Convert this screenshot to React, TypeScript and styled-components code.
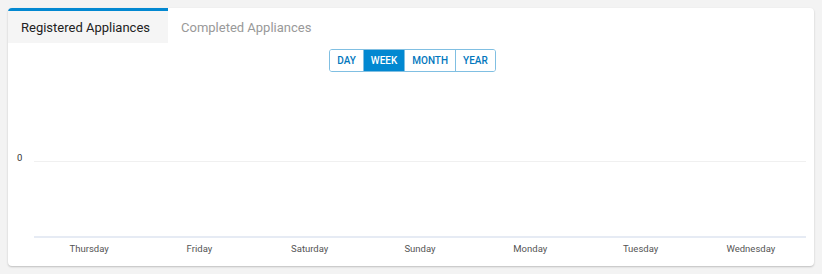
import styled, { createGlobalStyle } from "styled-components";
import { useState } from "react";

const GlobalStyle = createGlobalStyle`
  body {
    margin: 0;
    padding: 8px;
    background: #f3f3f3;
    font-family: Roboto, "Liberation Sans", sans-serif;
  }
`;

const days = ["Thursday", "Friday", "Saturday", "Sunday", "Monday", "Tuesday", "Wednesday"];
const ranges = ["DAY", "WEEK", "MONTH", "YEAR"];

export default function App() {
  const [tab, setTab] = useState(0);
  const [range, setRange] = useState("WEEK");

  return (
    <>
      <GlobalStyle />
      <Card>
        <TabBar>
          <Tab $active={tab === 0} onClick={() => setTab(0)}>
            Registered Appliances
          </Tab>
          <Tab $active={tab === 1} onClick={() => setTab(1)}>
            Completed Appliances
          </Tab>
        </TabBar>
        <Toolbar>
          <ButtonGroup>
            {ranges.map((r) => (
              <RangeButton key={r} $active={r === range} onClick={() => setRange(r)}>
                {r}
              </RangeButton>
            ))}
          </ButtonGroup>
        </Toolbar>
        <Chart />
      </Card>
    </>
  );
}

const Chart = () => {
  const left = 26;
  const right = 798;
  const step = (right - left) / days.length;
  return (
    <ChartSvg width={806} height={194} viewBox="0 0 806 194">
      <text x={9} y={89} className="ylabel">
        0
      </text>
      <line x1={left} x2={right} y1={89.5} y2={89.5} stroke="#f0f0f0" />
      <line x1={left} x2={right} y1={165} y2={165} stroke="#e6ebf4" strokeWidth={2} />
      {days.map((d, i) => (
        <text key={d} x={left + step * i + step / 2} y={180} className="xlabel" textAnchor="middle">
          {d}
        </text>
      ))}
    </ChartSvg>
  );
};

const Card = styled.div`
  width: 806px;
  height: 258px;
  background: #fff;
  border-radius: 4px;
  box-shadow: 0 1px 2px rgba(0, 0, 0, 0.22);
  overflow: hidden;
  display: flex;
  flex-direction: column;
`;

const TabBar = styled.div`
  display: flex;
  height: 35px;
`;

const Tab = styled.div<{ $active: boolean }>`
  box-sizing: border-box;
  width: 160px;
  height: 35px;
  padding: 0 0 0 13px;
  display: flex;
  align-items: center;
  font-size: 13px;
  cursor: pointer;
  border-top: 3px solid ${(p) => (p.$active ? "#0288d1" : "transparent")};
  background: ${(p) => (p.$active ? "#f5f5f5" : "#fff")};
  color: ${(p) => (p.$active ? "#222" : "#999")};
`;

const Toolbar = styled.div`
  display: flex;
  justify-content: center;
  padding-top: 6px;
  padding-left: 3px;
`;

const ButtonGroup = styled.div`
  display: flex;
  height: 23px;
  border: 1px solid #80bfe2;
  border-radius: 3px;
  overflow: hidden;
  box-sizing: border-box;
`;

const RangeButton = styled.button<{ $active: boolean }>`
  font-family: Roboto, "Liberation Sans", sans-serif;
  font-size: 10px;
  font-weight: 500;
  padding: 0 7px;
  border: none;
  border-left: 1px solid #80bfe2;
  background: ${(p) => (p.$active ? "#0288d1" : "#fff")};
  color: ${(p) => (p.$active ? "#fff" : "#0277bd")};
  cursor: pointer;
  &:first-child {
    border-left: none;
  }
`;

const ChartSvg = styled.svg`
  display: block;
  font-family: Roboto, "Liberation Sans", sans-serif;
  .ylabel {
    font-size: 9.5px;
    fill: #333;
  }
  .xlabel {
    font-size: 9.5px;
    fill: #555;
  }
`;
